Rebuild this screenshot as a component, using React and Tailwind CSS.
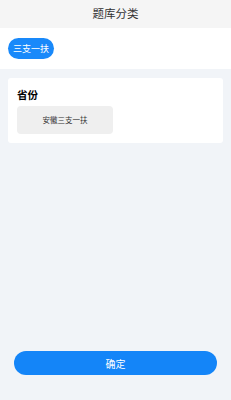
import React from "react";

export default function App() {
  return (
    <div
      className="w-full h-[400px] flex flex-col bg-[#f1f4f8]"
      style={{ fontFamily: "'Noto Sans CJK SC', 'Noto Sans', sans-serif" }}
    >
      {/* Header */}
      <div className="h-[28px] bg-[#f5f5f5] flex items-center justify-center text-[11.5px] text-[#333]">
        题库分类
      </div>

      {/* Category tabs */}
      <div className="bg-white h-[41px] flex items-center px-[8px]">
        <span className="h-[21px] px-[5px] rounded-full bg-[#1989fa] text-white text-[9px] flex items-center">
          三支一扶
        </span>
      </div>

      {/* Province card */}
      <div className="px-[8px] pt-[9px]">
        <div className="bg-white rounded-[3px] px-[9px] pt-[9px] pb-[9px]">
          <div className="text-[10.5px] font-bold text-black leading-[16px]">省份</div>
          <div className="mt-[3px] w-[96px] h-[28px] rounded-[4px] bg-[#efefef] flex items-center justify-center text-[7.5px] text-[#333]">
            安徽三支一扶
          </div>
        </div>
      </div>

      {/* Confirm */}
      <div className="mt-auto px-[14px] pb-[25px]">
        <button className="w-full h-[24px] rounded-full bg-[#1485f8] text-white text-[10px]">
          确定
        </button>
      </div>
    </div>
  );
}
